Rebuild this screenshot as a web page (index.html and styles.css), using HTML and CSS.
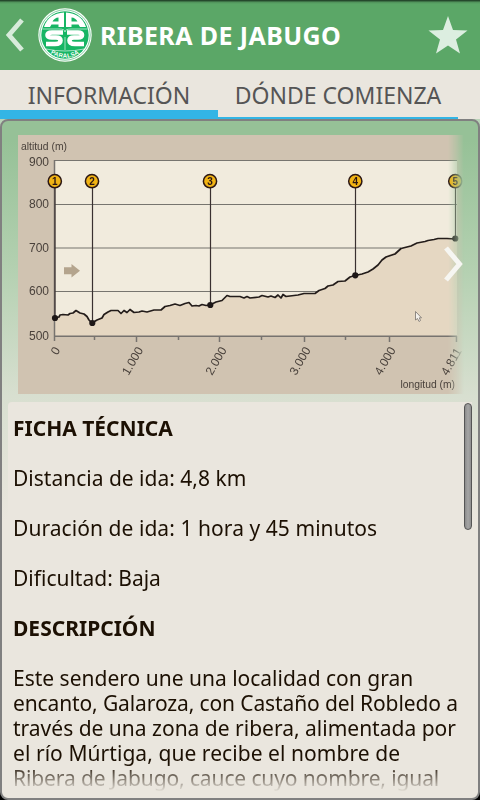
FILE: index.html
```
<!DOCTYPE html>
<html lang="es">

<head>
    <meta charset="UTF-8">
    <title>Ribera de Jabugo</title>

    <link rel="stylesheet" href="styles.css">
</head>

<body>

    <header class="banner">
        <svg class="atras" width="20" height="36" viewBox="0 0 20 36">
            <path d="M17 3 L4 18 L17 33" />
        </svg>
        <svg class="logo" width="54" height="54" viewBox="0 0 54 54">
            <circle cx="27" cy="27" r="26.7" fill="#fff" />
            <circle cx="27" cy="27" r="25.2" fill="none" stroke="#64c18a" stroke-width=".8" />
            <circle cx="27" cy="27" r="23.7" fill="#16b564" />
            <!-- las dos aes -->
            <g fill="#fff">
                <path fill-rule="evenodd" d="M26 4.500V19H20.500V16.500H13.500L12 19H6C9 10 16 5 26 4.500ZM20.500 9.500C18 9.500 15.500 11.500 14.500 13.500H20.500Z" />
                <path fill-rule="evenodd" d="M28 4.500V19H33.500V16.500H40.500L42 19H48C45 10 38 5 28 4.500ZM33.500 9.500C36 9.500 38.500 11.500 39.500 13.500H33.500Z" />
            </g>
            <g fill="none" stroke="#fff" stroke-width="4.600">
                <path d="M25 24.500H14Q9.500 24.500 9.500 27Q9.500 29.500 14 29.500H18Q22.500 29.500 22.500 32.500Q22.500 36 17 36H8" />
                <path d="M29 24.500H40Q44 24.500 44 27Q44 29.500 40 29.500H36Q31.500 29.500 31.500 32.500Q31.500 36 37 36H46" />
            </g>
            <path d="M4.500 21H21Q27 21 27 24Q27 21 33 21H49.500M27 29V42M8 41Q27 45 46 41" fill="none" stroke="#fff" stroke-width=".6" />
            <path id="arco" d="M10 43.500Q27 56 44 43.500" fill="none" />
            <text class="lema"><textPath href="#arco" startOffset="50%" text-anchor="middle">PARALSA</textPath></text>
        </svg>
        <h1>RIBERA DE JABUGO</h1>
        <svg class="estrella" width="40" height="38" viewBox="0 0 40 38">
            <path d="M20 0L25 14L39.500 14.500L28 23.500L32 37.500L20 29.500L8 37.500L12 23.500L.5 14.500L15 14Z" />
        </svg>
    </header>

    <nav class="tabs">
        <a class="tab valgt"><span>INFORMACIÓN</span></a>
        <a class="tab donde"><span>DÓNDE COMIENZA</span></a>
    </nav>

    <main>
        <section class="panel">
            <div class="galeria">
                <svg class="perfil" width="446" height="259" viewBox="18 135 446 259">
                    <rect x="18" y="135" width="446" height="259" fill="#d0c3b1" />
                    <rect x="54" y="160" width="403" height="176" fill="#f1ebdd" />
                    <!-- terreno -->
                    <path fill="#e5d7c2" d="M54 336V318L59 317L61 315L69 315L76 310.500L80 313L85 314L89 320L92 323L97 320L103 316L106 312L112 310L118 310L121 313L123 310.500L127 312L130 310L134 312.500L142 311L147 312L154 310L161 310L166 306L174 305L180 306L188 302.500L193 306L201 304.500L210 305L220 301L227 295.500L232 297L260 297L265 295.500L275 297L277 294.500L281 297L284 295L298 295L304 293.500L315 293L327 286L333 284L339 281L346 280.500L355 275.500L368 272L377 267L382 260L388 255L396 252L401 248L412 244.500L420 242L434 239L448 238.500L457 238.500V336Z" />
                    <g class="rejilla">
                        <path d="M54 160.500H457M54 204.500H457M54 248H401M54 291.500H318" />
                    </g>
                    <path d="M54 336.300H457M54.500 160V341M94.500 336V340M136.500 336V342M178.500 336V340M219.500 336V342M261.500 336V340M304.500 336V342M345.500 336V340M389.500 336V342M456.500 336V342" fill="none" stroke="#77736f" stroke-width="1.500" />
                    <path d="M55 187V318M92.500 187V323M210.500 187V305M355.500 187V275M455.500 187V238" fill="none" stroke="#3a3030" stroke-width="1.200" />
                    <path class="linea" d="M54 318L59 317L60 315L63 314.500L68 315L70 313.500L73 313L76 310.500L80 313L84 314L87 316.500L89 320L92 323L97 320L102 318L104 314.500L108 312L111 310.500L118 310.500L121 313.500L124 310.500L127 312.500L130 309.500L134 312.500L139 312L142 311L147 312L154 310L161 310L165 306.500L170 305.500L175 304L180 305.500L185 303.500L189 302.500L192 306L196 305.500L199 306L202 304.500L206 305.500L210 305L216 302L222 300.500L227 295.500L230 296.500H240L244 298L247 296.500L250 298L259 297L262 295.500L268 297L271 296L275 297.500L278 295L281 298L283 294.500L286 296.500L298 295L304 293.500L315 293.500L319 290.500L325 288.500L328 286L333 285L338 281.500L345 281L350 277L355 275.500L362 274L368 272L373 269L378 265L382 260L386 257L395 254L401 248.500L411 246L417 243L425 241.500L428 240.500L434 239.500L438 238.500L447 238.500L455 239" />
                    <g fill="#1d1717">
                        <circle cx="55" cy="318" r="3.100" />
                        <circle cx="92.300" cy="323" r="3.100" />
                        <circle cx="210.300" cy="305" r="3.100" />
                        <circle cx="355.300" cy="275.300" r="3.100" />
                        <circle cx="455.300" cy="238.500" r="3.100" />
                    </g>
                    <g fill="#f2b414" stroke="#2c1714" stroke-width="1.500">
                        <circle cx="54.800" cy="181.200" r="6.600" />
                        <circle cx="92" cy="181.200" r="6.600" />
                        <circle cx="210" cy="181.200" r="6.600" />
                        <circle cx="355.300" cy="181.200" r="6.600" />
                        <circle cx="455.300" cy="181.200" r="6.600" />
                    </g>
                    <g class="num">
                        <text x="54.800" y="184.900">1</text>
                        <text x="92" y="184.900">2</text>
                        <text x="210" y="184.900">3</text>
                        <text x="355.300" y="184.900">4</text>
                        <text x="455.300" y="184.900">5</text>
                    </g>
                    <g class="rotulo">
                        <text x="21" y="149.500" textLength="46" lengthAdjust="spacingAndGlyphs">altitud (m)</text>
                        <text x="400.500" y="387.500" textLength="54.500" lengthAdjust="spacingAndGlyphs">longitud (m)</text>
                    </g>
                    <g class="eje">
                        <text x="49" y="165.500">900</text>
                        <text x="49" y="208">800</text>
                        <text x="49" y="252">700</text>
                        <text x="49" y="295.300">600</text>
                        <text x="49" y="340">500</text>
                        <text transform="translate(60.500 350) rotate(-60)">0</text>
                        <text transform="translate(143.500 350) rotate(-60)">1.000</text>
                        <text transform="translate(227 350) rotate(-60)">2.000</text>
                        <text transform="translate(311 350) rotate(-60)">3.000</text>
                        <text transform="translate(396 350) rotate(-60)">4.000</text>
                        <text transform="translate(462 351) rotate(-60)">4.811</text>
                    </g>
                    <path d="M64 267.300H71.500V264L80 270.700L71.500 277.500V274.300H64Z" fill="#b4a48d" />
                    <path d="M415.500 311.500V320L417.500 318.500L419 321.500L420.500 320.500L419.300 317.800H421.500Z" fill="#f4f1ec" stroke="#77716c" stroke-width=".8" />
                </svg>
                <svg class="siguiente" width="20" height="38" viewBox="0 0 20 38">
                    <path d="M2 3L15.500 19L2 35" />
                </svg>
            </div>

            <article class="ficha">
                <div class="texto">
                    <h2>FICHA TÉCNICA</h2>
                    <p>Distancia de ida: 4,8 km</p>
                    <p class="ancho">Duración de ida: 1 hora y 45 minutos</p>
                    <p>Dificultad: Baja</p>
                    <h2>DESCRIPCIÓN</h2>
                    <p>Este sendero une una localidad con gran<br>
                        <span class="estrecho">encanto, Galaroza, con Castaño del Robledo a</span><br>
                        través de una zona de ribera, alimentada por<br>
                        <span class="ancho">el río Múrtiga, que recibe el nombre de</span><br>
                        <span class="estrecho">Ribera de Jabugo, cauce cuyo nombre, igual</span></p>
                </div>
                <div class="scroll"></div>
            </article>
        </section>
    </main>

</body>

</html>
```
FILE: styles.css
```
body {
    margin: 0;
    width: 480px;
    height: 800px;
    display: flex;
    flex-direction: column;
    overflow: hidden;
    background-color: #eae6de;
    font-family: "Noto Sans", "Open Sans", sans-serif;
}

h1,
h2,
p {
    margin: 0;
}

.banner {
    display: flex;
    align-items: center;
    box-sizing: border-box;
    height: 70px;
    padding: 0 12px 0 5px;
    background: linear-gradient(#1f3d25 0, #2b5333 1px, #4f9059 2px, #5ba767 4px);
}

.atras path {
    fill: none;
    stroke: #d8ebdb;
    stroke-width: 4.8;
}

.logo {
    margin-left: 13px;
}

.lema {
    font: bold 6px "Liberation Sans", sans-serif;
    fill: #fff;
    letter-spacing: 0.3px;
}

.banner h1 {
    margin-left: 8px;
    font-size: 25px;
    line-height: 34px;
    letter-spacing: 0.4px;
    white-space: nowrap;
    color: #fff;
}

.estrella {
    margin-left: auto;
    fill: #dceee0;
}

.tabs {
    display: flex;
    height: 49px;
}

.tab {
    box-sizing: border-box;
    width: 218px;
    border-bottom: 9px solid #33b5e5;
    font-size: 23px;
    line-height: 51px;
    text-align: center;
    white-space: nowrap;
    color: #555;
}

.donde {
    width: 240px;
    border-bottom-width: 2px;
}

main {
    flex: 1;
    background: linear-gradient(#b9d3b7 50%, #000 50%);
}

.panel {
    box-sizing: border-box;
    height: 681px;
    border: 2px solid #808080;
    border-radius: 8px;
    padding: 14px 6px 0;
    background: linear-gradient(#96c197 0, #96c197 20px, #b3d0b0 145px, #d8dfd0 275px, #eae6de 400px);
}

.galeria {
    position: relative;
    height: 267px;
    padding-left: 10px;
}

.perfil {
    display: block;
    font-family: "Liberation Sans", sans-serif;
    mask-image: linear-gradient(to right, #000 430px, rgba(0, 0, 0, 0.5) 439px, transparent 446px);
}

.rejilla {
    fill: none;
    stroke: #77756f;
    stroke-width: 1.2;
}

.linea {
    fill: none;
    stroke: #231c1a;
    stroke-width: 1.7;
    stroke-linejoin: round;
}

.num {
    font-size: 10px;
    font-weight: bold;
    text-anchor: middle;
    fill: #2c1714;
}

.rotulo {
    font-size: 11.5px;
    fill: #49413b;
}

.eje {
    font-size: 12px;
    text-anchor: end;
    fill: #49413b;
}

/* flecha encima de la imagen */
.siguiente {
    position: absolute;
    right: 8px;
    top: 110px;
}

.siguiente path {
    fill: none;
    stroke: #f6f6f2;
    stroke-width: 5;
}

.ficha {
    display: flex;
    justify-content: space-between;
    height: 391px;
    border-radius: 4px 0 0 4px;
    background-color: #eae6de;
    width: 464px;
}

.texto {
    overflow: hidden;
    padding: 14px 0 0 5px;
    font-size: 21px;
    line-height: 25px;
    white-space: nowrap;
    color: #1c1003;
    mask-image: linear-gradient(#000 362px, transparent 390px);
}

.texto h2 {
    margin-bottom: 25px;
    font-size: 21px;
    line-height: 25px;
}

.texto p {
    margin-bottom: 25px;
}

.ancho {
    letter-spacing: 0.06px;
}

.estrecho {
    letter-spacing: -0.12px;
}

.scroll {
    box-sizing: border-box;
    width: 8px;
    height: 127px;
    margin-top: 1px;
    border: 1px solid #555;
    border-radius: 4px;
    background: linear-gradient(to right, #8c8c8c, #a5a5a5 50%, #8f8f8f);
}
```
